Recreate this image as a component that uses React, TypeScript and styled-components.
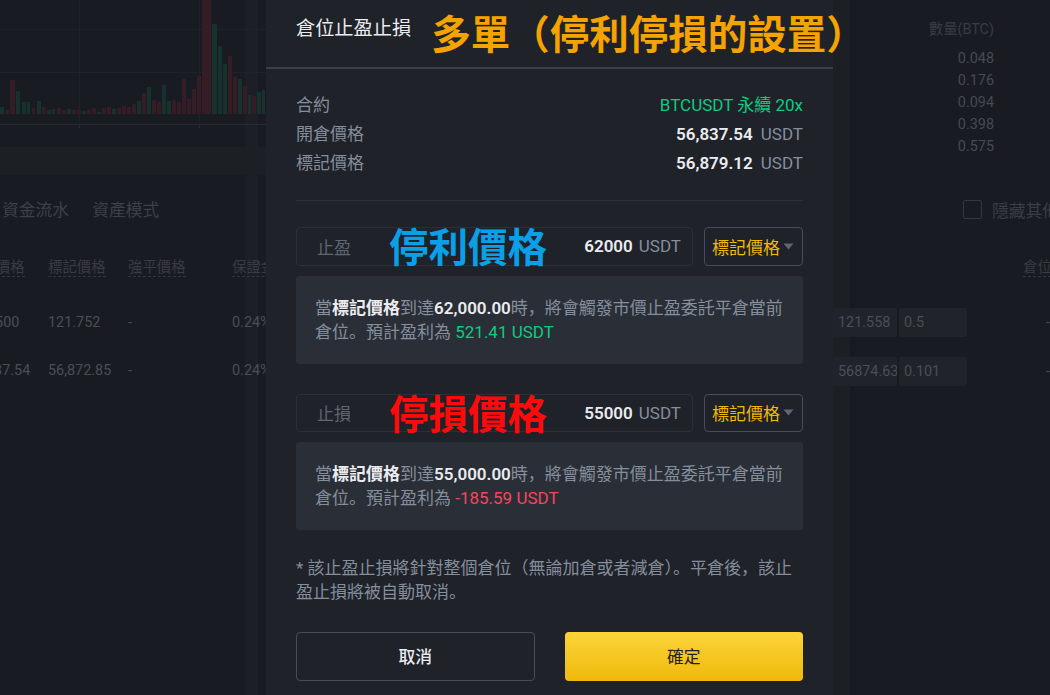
import React from "react";
import styled, { createGlobalStyle } from "styled-components";

const FONT = `Roboto, "Noto Sans CJK SC", sans-serif`;

const GlobalStyle = createGlobalStyle`
  html, body { margin: 0; padding: 0; background: #191b22; }
  body { font-family: ${FONT}; }
  * { box-sizing: border-box; }
`;

const Screen = styled.div`
  position: relative;
  width: 1050px;
  height: 695px;
  overflow: hidden;
  font-family: ${FONT};
  background:
    linear-gradient(90deg, transparent 245px, #1c1f25 245px, #1c1f25 258px, transparent 258px),
    linear-gradient(90deg, transparent 833px, #1c2024 833px, #1c2024 850px, #16191e 850px, #16191e 855px, transparent 855px),
    #191b22;
`;

/* ---------- background page (dimmed) ---------- */

const PageTop = styled.div`
  display: grid;
  grid-template-columns: 266px 589px 1fr;
  height: 176px;
`;

const ChartBox = styled.div`
  width: 266px;
  height: 176px;
`;

const Blank = styled.div``;

const TradeList = styled.div`
  display: flex;
  flex-direction: column;
  align-items: flex-end;
  padding: 19px 56px 0 0;
  font-size: 14.4px;
`;

const TradeHead = styled.div`
  line-height: 22px;
  color: #383c43;
  margin-bottom: 7px;
`;

const TradeRow = styled.div`
  line-height: 22px;
  color: #464a51;
`;

const PageBottom = styled.div`
  display: grid;
  grid-template-columns: 266px 567px 217px;
`;

const LeftPanel = styled.div`
  padding-top: 22px;
  overflow: hidden;
`;

const Tabs = styled.div`
  display: flex;
  gap: 23px;
  padding-left: 2px;
  font-size: 16.8px;
  line-height: 24px;
  color: #3c4048;
`;

const Table = styled.div`
  margin-top: 36px;
  margin-left: -33px;
  font-size: 14.4px;
`;

const TRow = styled.div<{ $head?: boolean }>`
  display: grid;
  grid-template-columns: 81px 80px 104px 120px;
  white-space: nowrap;
  line-height: ${(p) => (p.$head ? "20px" : "48px")};
  color: ${(p) => (p.$head ? "#383c43" : "#4a4e56")};
  margin-bottom: ${(p) => (p.$head ? "21px" : "0")};
`;

const Dotted = styled.span`
  border-bottom: 1px dashed #33363d;
`;

const RightPanel = styled.div`
  display: flex;
  flex-direction: column;
  font-size: 14.4px;
  overflow: hidden;
`;

const CheckRow = styled.div`
  display: flex;
  align-items: center;
  gap: 10px;
  margin-top: 24px;
  padding-left: 130px;
  height: 19px;
  white-space: nowrap;
  font-size: 16.8px;
  color: #3a3e45;
`;

const CheckBox = styled.span`
  flex: none;
  width: 19px;
  height: 19px;
  border: 1.5px solid #33373e;
  border-radius: 2px;
`;

const PosHead = styled.div`
  margin-top: 39px;
  padding-left: 190px;
  line-height: 20px;
  white-space: nowrap;
  color: #383c43;
`;

const PosRow = styled.div<{ $first?: boolean }>`
  display: flex;
  align-items: center;
  gap: 2px;
  height: 29px;
  margin-top: ${(p) => (p.$first ? "30px" : "20px")};
  color: #4a4e56;
`;

const PosBox = styled.div<{ $w: number }>`
  width: ${(p) => p.$w}px;
  height: 29px;
  line-height: 29px;
  padding-left: 5px;
  background: #202329;
  border-radius: 2px;
  overflow: hidden;
  white-space: nowrap;
`;

const Dash = styled.span`
  margin-left: auto;
  width: 4px;
`;

/* ---------- modal ---------- */

const Modal = styled.div`
  position: absolute;
  left: 266px;
  top: 0;
  width: 567px;
  background: #1f2229;
  color: #eaecef;
  padding-bottom: 30px;
`;

const Header = styled.div`
  height: 69px;
  display: flex;
  align-items: flex-start;
  padding: 17px 30px 0;
  border-bottom: 2px solid #3a3e47;
`;

const Title = styled.div`
  font-size: 19.2px;
  line-height: 24px;
  color: #eaecef;
  white-space: nowrap;
`;

const Stamp = styled.div<{ $color: string }>`
  font-family: "Noto Sans CJK SC", sans-serif;
  font-weight: 700;
  font-size: 39.5px;
  line-height: 39px;
  color: ${(p) => p.$color};
  white-space: nowrap;
`;

const HeaderStamp = styled(Stamp)`
  margin: -5px 0 0 20px;
`;

const FieldStamp = styled(Stamp)`
  position: absolute;
  left: 92px;
  top: -3px;
  font-size: 39.5px;
  line-height: 40px;
`;

const Body = styled.div`
  padding: 24px 30px 0;
  font-size: 17px;
`;

const InfoList = styled.div`
  display: flex;
  flex-direction: column;
  gap: 5px;
`;

const InfoRow = styled.div`
  display: flex;
  justify-content: space-between;
  line-height: 24px;
`;

const Label = styled.span`
  color: #848e9c;
`;

const Green = styled.span`
  color: #0ecb81;
`;

const Num = styled.span`
  font-weight: 600;
  color: #eaecef;
`;

const Unit = styled.span`
  color: #848e9c;
  margin-left: 8px;
`;

const Divider = styled.div`
  height: 1px;
  background: #2b2f37;
  margin: 25px 0 26px;
`;

const FieldRow = styled.div<{ $top?: number }>`
  display: flex;
  gap: 11px;
  margin-top: ${(p) => p.$top ?? 0}px;
`;

const Field = styled.div`
  position: relative;
  flex: 1;
  height: 38.5px;
  display: flex;
  align-items: center;
  padding: 0 11px 0 20px;
  border: 1px solid #2b2f36;
  border-radius: 4px;
`;

const FieldLabel = styled.span`
  color: #5e6673;
`;

const FieldValue = styled.span`
  margin-left: auto;
  font-weight: 600;
  color: #eaecef;
`;

const FieldUnit = styled.span`
  margin-left: 6px;
  color: #848e9c;
`;

const Select = styled.div`
  width: 99px;
  height: 38.5px;
  display: flex;
  align-items: center;
  gap: 3px;
  padding-left: 7px;
  border: 1px solid #474d57;
  border-radius: 4px;
  color: #f0b90b;
  white-space: nowrap;
`;

const Notice = styled.div`
  margin-top: 10px;
  padding: 20px 19px;
  background: #2a2e36;
  border-radius: 3px;
  line-height: 24px;
  color: #848e9c;
`;

const Strong = styled.span`
  color: #eaecef;
  font-weight: 600;
`;

const Amount = styled.span<{ $up: boolean }>`
  color: ${(p) => (p.$up ? "#0ecb81" : "#f6465d")};
`;

const Footnote = styled.div`
  margin-top: 26px;
  line-height: 24px;
  color: #848e9c;
`;

const Buttons = styled.div`
  margin-top: 28px;
  display: grid;
  grid-template-columns: 1fr 1fr;
  gap: 30px;
`;

const Button = styled.div<{ $primary?: boolean }>`
  height: 48.5px;
  display: flex;
  align-items: center;
  justify-content: center;
  border-radius: 4px;
  font-size: 16.8px;
  ${(p) =>
    p.$primary
      ? `background: linear-gradient(180deg, #fbd43a 0%, #f0b90b 100%); color: #1e2026;`
      : `border: 1px solid #474d57; color: #eaecef; font-weight: 500;`}
`;

const Caret = () => (
  <svg width="11" height="7" viewBox="0 0 11 7">
    <path d="M0.5 0.5 L10.5 0.5 L5.5 6.5 Z" fill="#5e6673" />
  </svg>
);

const bars: [number, number, number, "r" | "g"][] = [
  [0, 5, 107, "g"], [5, 5, 110, "r"], [10, 6, 80, "r"], [16, 5, 91, "g"], [22, 5, 102, "g"],
  [27, 4, 102, "g"], [32, 4, 108, "r"], [37, 5, 101, "g"], [42, 5, 107, "r"], [47, 5, 110, "g"],
  [52, 4, 109, "g"], [57, 5, 108, "r"], [62, 5, 110, "r"], [67, 5, 109, "g"], [72, 5, 110, "r"],
  [77, 5, 110, "r"], [82, 5, 111, "g"], [87, 5, 110, "r"], [92, 5, 108, "r"], [97, 5, 112, "g"],
  [102, 5, 108, "r"], [107, 5, 107, "r"], [112, 5, 109, "g"], [117, 5, 108, "r"], [122, 5, 106, "r"],
  [127, 5, 107, "r"], [132, 5, 104, "r"], [137, 5, 101, "g"], [142, 5, 93, "r"], [147, 5, 87, "g"],
  [152, 5, 100, "r"], [157, 5, 102, "r"], [162, 5, 85, "g"], [167, 5, 101, "g"], [172, 5, 100, "r"],
  [177, 5, 102, "r"], [182, 5, 79, "r"], [187, 5, 99, "r"], [192, 5, 89, "r"], [197, 5, 76, "r"],
  [202, 10, 0, "r"], [212, 6, 24, "g"], [218, 5, 46, "g"], [223, 5, 64, "g"], [228, 5, 56, "r"],
  [233, 5, 77, "r"], [238, 5, 79, "g"], [243, 5, 86, "r"], [248, 4, 95, "g"], [252, 5, 96, "r"],
  [257, 5, 92, "g"], [262, 4, 90, "g"],
];

const VolumeChart = () => (
  <svg width="266" height="176" viewBox="0 0 266 176">
    <line x1="0" y1="29.5" x2="266" y2="29.5" stroke="#1f2228" />
    <line x1="0" y1="72.5" x2="266" y2="72.5" stroke="#1f2228" />
    <line x1="79.5" y1="0" x2="79.5" y2="124" stroke="#1e2127" />
    <line x1="199.5" y1="0" x2="199.5" y2="124" stroke="#1e2127" />
    {bars.map(([x, w, top, c], i) => (
      <rect key={i} x={x} y={top} width={w - 1} height={114 - top} fill={c === "r" ? "#361d25" : "#17312c"} />
    ))}
    <line x1="0" y1="124.5" x2="266" y2="124.5" stroke="#272a31" />
    <line x1="79.5" y1="124" x2="79.5" y2="128" stroke="#272a31" />
    <line x1="199.5" y1="124" x2="199.5" y2="128" stroke="#272a31" />
    <rect x="0" y="147" width="266" height="28" fill="#1c1f24" />
  </svg>
);

export default function App() {
  return (
    <Screen>
      <GlobalStyle />
      <PageTop>
        <ChartBox>
          <VolumeChart />
        </ChartBox>
        <Blank />
        <TradeList>
          <TradeHead>數量(BTC)</TradeHead>
          <TradeRow>0.048</TradeRow>
          <TradeRow>0.176</TradeRow>
          <TradeRow>0.094</TradeRow>
          <TradeRow>0.398</TradeRow>
          <TradeRow>0.575</TradeRow>
        </TradeList>
      </PageTop>
      <PageBottom>
        <LeftPanel>
          <Tabs>
            <span>資金流水</span>
            <span>資產模式</span>
          </Tabs>
          <Table>
            <TRow $head>
              <span><Dotted>開倉價格</Dotted></span>
              <span><Dotted>標記價格</Dotted></span>
              <span><Dotted>強平價格</Dotted></span>
              <span><Dotted>保證金比率</Dotted></span>
            </TRow>
            <TRow>
              <span>121.500</span>
              <span>121.752</span>
              <span>-</span>
              <span>0.24%</span>
            </TRow>
            <TRow>
              <span>56,837.54</span>
              <span>56,872.85</span>
              <span>-</span>
              <span>0.24%</span>
            </TRow>
          </Table>
        </LeftPanel>
        <Blank />
        <RightPanel>
          <CheckRow>
            <CheckBox />
            <span>隱藏其他合約</span>
          </CheckRow>
          <PosHead>
            <Dotted>倉位操作</Dotted>
          </PosHead>
          <PosRow $first>
            <PosBox $w={64}>121.558</PosBox>
            <PosBox $w={68}>0.5</PosBox>
            <Dash>-</Dash>
          </PosRow>
          <PosRow>
            <PosBox $w={64}>56874.63</PosBox>
            <PosBox $w={68}>0.101</PosBox>
            <Dash>-</Dash>
          </PosRow>
        </RightPanel>
      </PageBottom>

      <Modal>
        <Header>
          <Title>倉位止盈止損</Title>
          <HeaderStamp $color="#f5a300">多單（停利停損的設置）</HeaderStamp>
        </Header>
        <Body>
          <InfoList>
            <InfoRow>
              <Label>合約</Label>
              <Green>BTCUSDT 永續 20x</Green>
            </InfoRow>
            <InfoRow>
              <Label>開倉價格</Label>
              <span>
                <Num>56,837.54</Num>
                <Unit>USDT</Unit>
              </span>
            </InfoRow>
            <InfoRow>
              <Label>標記價格</Label>
              <span>
                <Num>56,879.12</Num>
                <Unit>USDT</Unit>
              </span>
            </InfoRow>
          </InfoList>
          <Divider />

          <FieldRow>
            <Field>
              <FieldLabel>止盈</FieldLabel>
              <FieldStamp $color="#0aa0e8">停利價格</FieldStamp>
              <FieldValue>62000</FieldValue>
              <FieldUnit>USDT</FieldUnit>
            </Field>
            <Select>
              標記價格
              <Caret />
            </Select>
          </FieldRow>
          <Notice>
            當<Strong>標記價格</Strong>到達<Strong>62,000.00</Strong>時，將會觸發市價止盈委託平倉當前倉位。預計盈利為{" "}
            <Amount $up>521.41 USDT</Amount>
          </Notice>

          <FieldRow $top={30}>
            <Field>
              <FieldLabel>止損</FieldLabel>
              <FieldStamp $color="#ff0a0a">停損價格</FieldStamp>
              <FieldValue>55000</FieldValue>
              <FieldUnit>USDT</FieldUnit>
            </Field>
            <Select>
              標記價格
              <Caret />
            </Select>
          </FieldRow>
          <Notice>
            當<Strong>標記價格</Strong>到達<Strong>55,000.00</Strong>時，將會觸發市價止盈委託平倉當前倉位。預計盈利為{" "}
            <Amount $up={false}>-185.59 USDT</Amount>
          </Notice>

          <Footnote>* 該止盈止損將針對整個倉位（無論加倉或者減倉）。平倉後，該止盈止損將被自動取消。</Footnote>

          <Buttons>
            <Button>取消</Button>
            <Button $primary>確定</Button>
          </Buttons>
        </Body>
      </Modal>
    </Screen>
  );
}
